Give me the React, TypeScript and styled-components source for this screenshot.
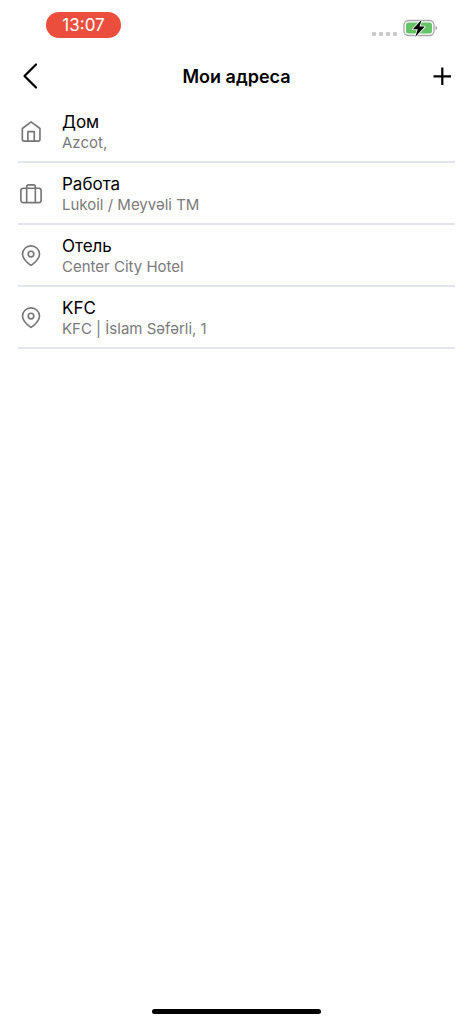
import React from "react";
import styled, { createGlobalStyle } from "styled-components";

const GlobalStyle = createGlobalStyle`
  * { box-sizing: border-box; }
  body {
    margin: 0;
    background: #fff;
    color: #000;
    font-family: Inter, "Liberation Sans", sans-serif;
  }
`;

const Screen = styled.div`
  display: flex;
  flex-direction: column;
  min-height: 100vh;
`;

const StatusBar = styled.div`
  display: flex;
  justify-content: space-between;
  align-items: flex-start;
  height: 51px;
  padding: 12px 35px 0 46px;
`;

const Clock = styled.time`
  width: 75px;
  border-radius: 13px;
  background: #eb4e3d;
  color: #fff;
  font-size: 17px;
  line-height: 26px;
  text-align: center;
`;

const StatusIcons = styled.div`
  display: flex;
  align-items: center;
  gap: 6px;
  padding-top: 6px;
`;

const SignalDots = styled.div`
  display: flex;
  gap: 3px;
  padding-top: 11px;
`;

const Dot = styled.span`
  width: 4px;
  height: 4px;
  border-radius: 1px;
  background: #c9c9c9;
`;

const Header = styled.header`
  display: grid;
  grid-template-columns: 44px 1fr 44px;
  align-items: center;
  height: 50px;
  padding: 0 9px;
`;

const IconButton = styled.button`
  display: flex;
  align-items: center;
  justify-content: center;
  height: 44px;
  padding: 0;
  border: 0;
  background: none;
  color: #000;
`;

const Title = styled.h1`
  margin: 0;
  padding-top: 2px;
  font-size: 18px;
  font-weight: 600;
  line-height: 24px;
  text-align: center;
`;

const AddressList = styled.ul`
  flex: 1;
  margin: 0;
  padding: 0 18px;
  list-style: none;
`;

const AddressRow = styled.li`
  display: flex;
  align-items: center;
  gap: 18px;
  height: 62px;
  border-bottom: 2px solid #e4e4ee;
`;

const RowIcon = styled.span`
  display: flex;
  width: 26px;
  color: #767676;
`;

const AddressText = styled.div`
  padding-top: 4px;
`;

const AddressName = styled.div`
  font-size: 17px;
  line-height: 20px;
`;

const AddressDetail = styled.div`
  color: #7a7a7a;
  font-size: 15px;
  line-height: 22px;
`;

const HomeIndicator = styled.div`
  align-self: center;
  width: 169px;
  height: 5px;
  margin-bottom: 10px;
  border-radius: 3px;
  background: #000;
`;

type IconKind = "home" | "work" | "pin";

const HomeIcon = () => (
  <>
    <path d="M4.500 10.400 13.600 3.500l9.200 6.900v11.100a2 2 0 0 1-2 2H6.500a2 2 0 0 1-2-2z" />
    <path d="M10.300 23.500v-9.800h6.600v9.800" />
  </>
);

const BriefcaseIcon = () => (
  <>
    <rect x="3" y="8" width="21" height="15" rx="2.500" />
    <path d="M9 23V6.500a2 2 0 0 1 2-2h5a2 2 0 0 1 2 2V23" />
  </>
);

const PinIcon = () => (
  <>
    <path d="M22.300 12c0 6.300-8.800 11.800-8.800 11.800S4.700 18.300 4.700 12a8.800 8.500 0 0 1 17.600 0z" />
    <circle cx="13.500" cy="12" r="2.900" />
  </>
);

const drawings: Record<IconKind, React.FC> = {
  home: HomeIcon,
  work: BriefcaseIcon,
  pin: PinIcon,
};

const addresses: { name: string; detail: string; icon: IconKind }[] = [
  { name: "Дом", detail: "Azcot,", icon: "home" },
  { name: "Работа", detail: "Lukoil / Meyvəli TM", icon: "work" },
  { name: "Отель", detail: "Center City Hotel", icon: "pin" },
  { name: "KFC", detail: "KFC | İslam Səfərli, 1", icon: "pin" },
];

const Battery = () => (
  <svg width="35" height="20" viewBox="0 0 35 20" aria-hidden="true">
    <rect x="1" y="2.500" width="30" height="15" rx="4.500" fill="#fff" stroke="#a6a6a6" strokeWidth="1.300" />
    <rect x="3" y="4.500" width="26" height="11" rx="2.500" fill="#65c466" />
    <path d="M32.500 7.700c2 .7 2 4 0 4.700z" fill="#a6a6a6" />
    <path
      d="M18.800 1.500 9.800 11.200h5l-2.600 7.800 9.600-10.400h-5.300z"
      fill="#000"
      stroke="#fff"
      strokeWidth="1.600"
      strokeLinejoin="round"
      paintOrder="stroke"
    />
  </svg>
);

export default function App() {
  return (
    <Screen>
      <GlobalStyle />
      <StatusBar>
        <Clock>13:07</Clock>
        <StatusIcons>
          <SignalDots>
            <Dot />
            <Dot />
            <Dot />
            <Dot />
          </SignalDots>
          <Battery />
        </StatusIcons>
      </StatusBar>
      <Header>
        <IconButton type="button" aria-label="Назад">
          <svg width="28" height="28" viewBox="0 0 28 28" fill="none" stroke="currentColor" strokeWidth="2.200" strokeLinecap="round" strokeLinejoin="round">
            <path d="M19 2.500 7.500 14 19 25.500" />
          </svg>
        </IconButton>
        <Title>Мои адреса</Title>
        <IconButton type="button" aria-label="Добавить адрес">
          <svg width="20" height="20" viewBox="0 0 20 20" fill="none" stroke="currentColor" strokeWidth="2.200">
            <path d="M10.300 1.500v17.500M1.500 10.300H19" />
          </svg>
        </IconButton>
      </Header>
      <AddressList>
        {addresses.map(({ name, detail, icon }) => {
          const Drawing = drawings[icon];
          return (
            <AddressRow key={name}>
              <RowIcon>
                <svg width="27" height="27" viewBox="0 0 27 27" fill="none" stroke="currentColor" strokeWidth="1.700" strokeLinejoin="round" aria-hidden="true">
                  <Drawing />
                </svg>
              </RowIcon>
              <AddressText>
                <AddressName>{name}</AddressName>
                <AddressDetail>{detail}</AddressDetail>
              </AddressText>
            </AddressRow>
          );
        })}
      </AddressList>
      <HomeIndicator />
    </Screen>
  );
}
